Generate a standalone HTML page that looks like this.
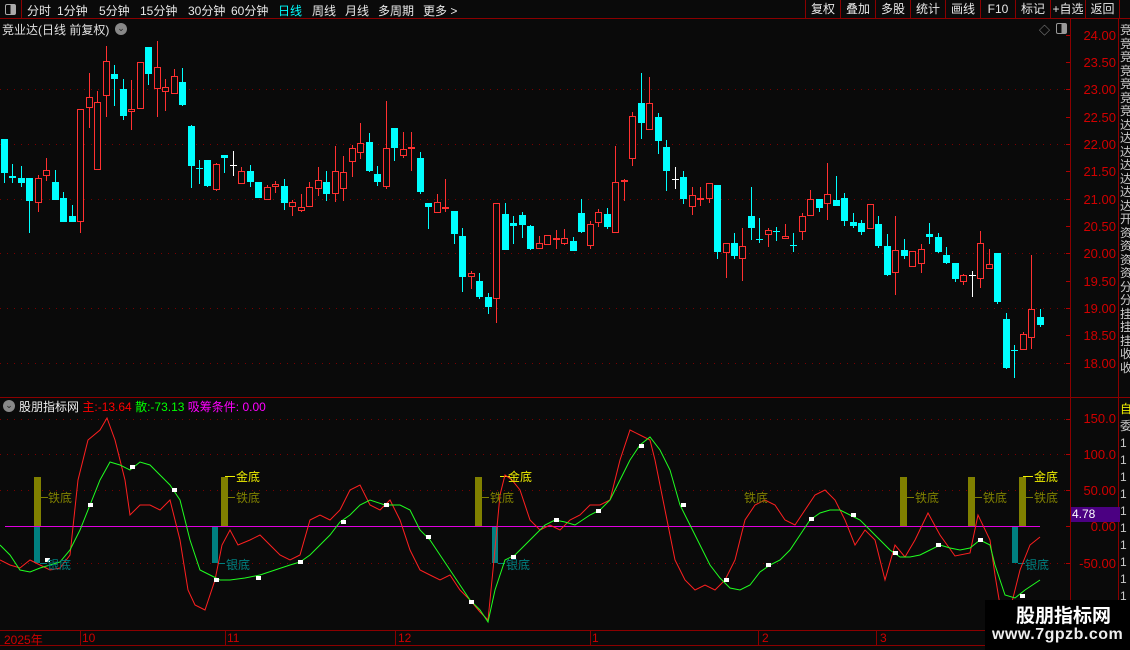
<!DOCTYPE html>
<html><head><meta charset="utf-8"><style>
*{margin:0;padding:0;box-sizing:border-box}
body{width:1130px;height:650px;background:#0a0a0a;overflow:hidden;position:relative;font-family:"Liberation Sans","Noto Sans CJK SC",sans-serif;color:#ddd;font-size:12px}
.a{position:absolute;white-space:nowrap}
.tb{position:absolute;top:0;left:0;width:1130px;height:19px;border-bottom:1px solid #8b0000}
.tb span{position:absolute;top:2px;font-size:12px;color:#e8e8e8}
.rb{position:absolute;top:0;height:19px;border-left:1px solid #8b0000;color:#e8e8e8;font-size:12px;text-align:center;line-height:18px}
.ax{position:absolute;left:1072px;width:44px;text-align:right;color:#d00000;font-size:13px;font-family:"Liberation Sans",sans-serif}
</style></head><body>
<div class="tb">
<div class="a" style="left:0;top:0;width:22px;height:19px;border-right:1px solid #8b0000"></div>
<div class="a" style="left:5px;top:4px;width:11px;height:11px;border:1px solid #aaa;border-radius:2px;background:linear-gradient(90deg,#0a0a0a 50%,#aaa 50%)"></div>
<span style="left:27px">分时</span><span style="left:57px">1分钟</span><span style="left:99px">5分钟</span><span style="left:140px">15分钟</span><span style="left:188px">30分钟</span><span style="left:231px">60分钟</span><span style="left:278px;color:#00ffff">日线</span><span style="left:312px">周线</span><span style="left:345px">月线</span><span style="left:378px">多周期</span><span style="left:423px">更多 &gt;</span>
</div>
<div class="rb" style="left:805px;width:35px">复权</div><div class="rb" style="left:840px;width:35px">叠加</div><div class="rb" style="left:875px;width:35px">多股</div><div class="rb" style="left:910px;width:35px">统计</div><div class="rb" style="left:945px;width:35px">画线</div><div class="rb" style="left:980px;width:35px">F10</div><div class="rb" style="left:1015px;width:35px">标记</div><div class="rb" style="left:1050px;width:35px">+自选</div><div class="rb" style="left:1085px;width:35px;border-right:1px solid #8b0000">返回</div>
<div class="a" style="left:2px;top:21px;font-size:12px;color:#e0e0e0">竞业达(日线 前复权)</div>
<div class="a" style="left:115px;top:23px;width:12px;height:12px;border-radius:6px;background:#888;color:#222;font-size:9px;text-align:center;line-height:11px">⌄</div>
<div class="a" style="left:1039px;top:22px;color:#999;font-size:11px">◇</div>
<div class="a" style="left:1056px;top:23px;width:11px;height:11px;border:1px solid #999;border-radius:2px;background:linear-gradient(90deg,#0a0a0a 50%,#999 50%)"></div>

<svg class="a" style="left:0;top:0" width="1130" height="650" id="s">
<line x1="1070.5" y1="19" x2="1070.5" y2="630" stroke="#8b0000"/>
<line x1="1118.5" y1="19" x2="1118.5" y2="650" stroke="#8b0000"/>
<line x1="0" y1="397.5" x2="1130" y2="397.5" stroke="#8b0000"/>
<line x1="0" y1="630.5" x2="1070" y2="630.5" stroke="#8b0000"/>
<line x1="0" y1="645.5" x2="1070" y2="645.5" stroke="#8b0000"/>
<g id="g"></g>
</svg>
<div class="ax" style="top:28px">24.00</div><div class="ax" style="top:55px">23.50</div><div class="ax" style="top:82px">23.00</div><div class="ax" style="top:110px">22.50</div><div class="ax" style="top:137px">22.00</div><div class="ax" style="top:164px">21.50</div><div class="ax" style="top:192px">21.00</div><div class="ax" style="top:219px">20.50</div><div class="ax" style="top:246px">20.00</div><div class="ax" style="top:274px">19.50</div><div class="ax" style="top:301px">19.00</div><div class="ax" style="top:328px">18.50</div><div class="ax" style="top:356px">18.00</div>
<div class="ax" style="top:411px">150.0</div><div class="ax" style="top:447px">100.0</div><div class="ax" style="top:483px">50.00</div><div class="ax" style="top:519px">0.00</div><div class="ax" style="top:556px">-50.00</div>
<div class="a" style="left:1071px;top:507px;width:49px;height:15px;background:#4b0082;color:#fff;font-size:12px;line-height:15px;padding-left:1px">4.78</div>
<div class="a" style="left:1120px;top:24px;width:10px;font-size:12px;line-height:13.5px;color:#ccc;white-space:normal;word-break:break-all;overflow:hidden;height:370px">竞竞竞竞竞竞竞达达达达达达达开资资资资分分挂挂挂收收</div>
<div class="a" style="left:1120px;top:400px;width:10px;font-size:12px;line-height:18px;color:#ee0;overflow:hidden">自</div>
<div class="a" style="left:1120px;top:418px;width:10px;font-size:12px;line-height:17px;color:#ccc;white-space:normal;word-break:break-all;overflow:hidden;height:200px">委1111111111</div>

<div class="a" style="left:3px;top:400px;width:12px;height:12px;border-radius:6px;background:#888;color:#222;font-size:9px;text-align:center;line-height:11px">⌄</div>
<div class="a" style="left:19px;top:398px;font-size:12px"><span style="color:#eee">股朋指标网</span> <span style="color:#f00">主:-13.64</span> <span style="color:#0f0">散:-73.13</span> <span style="color:#f0f">吸筹条件: 0.00</span></div>

<div class="a" style="left:4px;top:631px;color:#d00000;font-size:12px">2025年</div>
<div class="a" style="left:82px;top:631px;color:#d00000">10</div><div class="a" style="left:227px;top:631px;color:#d00000">11</div><div class="a" style="left:398px;top:631px;color:#d00000">12</div><div class="a" style="left:592px;top:631px;color:#d00000">1</div><div class="a" style="left:762px;top:631px;color:#d00000">2</div><div class="a" style="left:880px;top:631px;color:#d00000">3</div>

<div class="a" style="left:985px;top:600px;width:145px;height:50px;background:#000"></div>
<div class="a" style="left:1016px;top:601px;color:#fff;font-size:19px;font-weight:bold">股朋指标网</div>
<div class="a" style="left:992px;top:626px;color:#eee;font-size:16px;font-weight:bold;letter-spacing:0.5px">www.7gpzb.com</div>

<script>
var C=[[4,139,173,139,183,'c'],[12,176,178,164,183,'c'],[21,178,183,166,187,'c'],[29,178,201,178,233,'c'],[38,178,203,175,212,'r'],[46,170,176,158,181,'r'],[55,182,200,170,200,'c'],[63,198,222,192,222,'c'],[72,216,222,205,222,'c'],[80,109,222,109,233,'r'],[89,97,108,73,128,'r'],[97,102,170,91,170,'r'],[106,61,96,46,117,'r'],[114,74,79,65,106,'c'],[123,89,116,79,120,'c'],[131,109,112,80,130,'r'],[140,62,109,62,109,'r'],[148,47,74,47,85,'c'],[157,67,89,41,117,'r'],[165,87,92,79,111,'r'],[174,76,94,69,94,'r'],[182,82,105,68,106,'c'],[191,126,166,125,188,'c'],[199,168,168,160,184,'c'],[207,160,186,160,187,'c'],[216,164,190,163,191,'r'],[224,155,158,155,173,'c'],[233,165,165,151,176,'w'],[241,171,184,167,184,'r'],[250,171,182,165,187,'c'],[258,182,198,182,198,'c'],[267,187,200,185,200,'r'],[275,184,187,181,193,'r'],[284,186,203,179,210,'c'],[292,202,207,200,216,'r'],[301,207,211,194,212,'r'],[309,187,207,182,207,'r'],[318,180,189,167,196,'r'],[326,182,194,171,201,'c'],[335,171,194,146,202,'r'],[343,172,189,156,201,'r'],[352,148,162,145,177,'r'],[360,143,153,123,159,'r'],[369,142,171,133,172,'c'],[377,174,182,166,186,'c'],[386,148,187,101,189,'r'],[394,128,148,128,161,'c'],[403,149,156,132,158,'r'],[411,147,149,132,171,'r'],[420,158,192,152,194,'c'],[428,203,207,203,229,'c'],[437,202,213,194,213,'r'],[445,207,209,179,212,'r'],[454,211,234,211,244,'c'],[462,236,277,228,292,'c'],[471,273,277,271,289,'r'],[479,281,297,273,299,'c'],[488,297,307,293,314,'c'],[496,203,299,203,323,'r'],[505,214,250,203,250,'c'],[513,223,226,216,244,'c'],[522,215,225,212,238,'c'],[530,226,249,225,250,'c'],[539,243,249,236,249,'r'],[547,235,245,235,245,'r'],[556,238,240,230,249,'r'],[564,238,244,229,245,'r'],[573,241,251,237,251,'c'],[581,213,232,199,233,'c'],[590,224,246,221,249,'r'],[598,212,223,209,227,'r'],[607,214,227,208,229,'c'],[615,182,233,146,233,'r'],[624,180,182,179,201,'r'],[632,116,159,112,166,'r'],[641,103,123,73,139,'c'],[649,103,130,77,130,'r'],[658,117,141,113,154,'c'],[666,147,171,140,191,'c'],[675,179,179,167,189,'w'],[683,177,199,171,204,'c'],[692,195,207,187,215,'r'],[700,198,200,187,206,'r'],[709,183,199,183,203,'r'],[717,185,252,185,259,'c'],[726,243,253,243,278,'r'],[734,243,256,233,259,'c'],[742,246,259,228,281,'r'],[751,216,228,187,240,'c'],[759,239,239,218,243,'c'],[768,230,235,228,247,'r'],[776,231,231,227,241,'c'],[785,236,239,224,239,'r'],[793,245,245,233,252,'c'],[802,216,232,213,240,'r'],[810,199,216,190,216,'r'],[819,199,208,199,212,'c'],[827,194,204,163,220,'r'],[836,200,206,176,206,'c'],[844,198,221,193,226,'c'],[853,222,226,213,228,'c'],[861,223,232,220,235,'c'],[870,204,229,204,229,'r'],[878,224,246,216,248,'c'],[887,246,275,234,276,'c'],[895,250,273,216,295,'r'],[904,250,256,239,259,'c'],[912,251,267,251,267,'r'],[921,249,264,244,273,'r'],[929,234,237,223,244,'c'],[938,237,252,233,253,'c'],[946,255,263,247,264,'c'],[955,263,279,263,282,'c'],[963,275,282,274,285,'r'],[972,275,275,271,297,'w'],[980,243,279,231,288,'r'],[989,264,269,249,269,'r'],[997,253,302,253,304,'c'],[1006,319,368,313,369,'c'],[1014,350,350,345,378,'c'],[1023,334,350,332,350,'r'],[1031,309,338,255,349,'r'],[1040,317,325,309,327,'c']];
var s='';
[89,144,199,253,308,363,419,454,490,563].forEach(function(y){s+='<line x1="0" y1="'+(y+.5)+'" x2="1070" y2="'+(y+.5)+'" stroke="#7a0000" stroke-dasharray="1,6"/>';});
[35,62,89,117,144,171,199,226,253,281,308,335,363,419,454,490,526,563].forEach(function(y){s+='<line x1="1066" y1="'+(y+.5)+'" x2="1070" y2="'+(y+.5)+'" stroke="#b00000"/>';});
[80,225,395,590,758,876].forEach(function(x){s+='<line x1="'+(x+.5)+'" y1="630" x2="'+(x+.5)+'" y2="645" stroke="#8b0000"/>';});
C.forEach(function(c){var x=c[0],col=c[5]=='c'?'#00ffff':c[5]=='r'?'#ff3030':'#fff';
s+='<line x1="'+(x+.5)+'" y1="'+c[3]+'" x2="'+(x+.5)+'" y2="'+c[4]+'" stroke="'+col+'"/>';
var h=Math.max(c[2]-c[1],1);
if(c[5]=='c')s+='<rect x="'+(x-3)+'" y="'+c[1]+'" width="7" height="'+h+'" fill="'+col+'"/>';
else if(c[5]=='r')s+='<rect x="'+(x-2.5)+'" y="'+(c[1]+.5)+'" width="6" height="'+(h-1<1?1:h-1)+'" fill="#0a0a0a" stroke="'+col+'"/>';
else s+='<line x1="'+(x-3)+'" y1="'+(c[1]+.5)+'" x2="'+(x+4)+'" y2="'+(c[1]+.5)+'" stroke="#fff"/>';});
[[34,477],[221,477],[475,477],[900,477],[968,477],[1019,477]].forEach(function(b){s+='<rect x="'+b[0]+'" y="477" width="7" height="49" fill="#808000"/><line x1="'+(b[0]+7)+'" y1="497.5" x2="'+(b[0]+14)+'" y2="497.5" stroke="#808000"/>';});
[34,212,492,1012].forEach(function(x){s+='<rect x="'+x+'" y="526" width="6" height="37" fill="#008080"/><line x1="'+(x+6)+'" y1="563.5" x2="'+(x+13)+'" y2="563.5" stroke="#008080"/>';});
[221,496,1019].forEach(function(x){s+='<line x1="'+(x+4)+'" y1="476.5" x2="'+(x+14)+'" y2="476.5" stroke="#ee0"/>';});
s+='<line x1="5" y1="526.5" x2="1040" y2="526.5" stroke="#e000e0"/>';
var R=[0,560,10,565,20,568,30,560,40,565,50,570,60,568,70,555,78,480,88,440,100,430,107,418,115,440,125,480,130,515,140,505,150,505,160,510,170,500,180,540,188,590,195,605,205,610,215,580,222,545,230,530,238,545,250,540,260,535,270,545,280,555,290,560,300,555,310,520,320,515,330,520,340,510,350,490,360,485,370,505,380,510,390,500,400,520,410,550,420,570,430,575,440,580,450,575,460,590,470,600,480,612,488,620,493,570,500,495,505,475,512,480,520,490,530,520,540,530,550,525,560,530,570,520,580,515,590,505,600,505,610,500,620,460,630,430,640,435,650,440,655,460,665,510,675,560,685,580,695,590,705,585,715,590,725,580,735,560,745,520,755,505,765,500,775,505,785,520,795,525,805,510,815,495,825,490,835,500,845,520,855,545,865,530,875,540,885,580,895,545,905,557,915,540,928,513,940,535,955,556,970,553,978,515,990,540,995,575,1000,605,1010,610,1020,570,1030,545,1040,537];
var G=[0,545,10,555,20,570,30,572,40,568,50,565,60,562,70,550,80,530,90,505,100,480,110,462,120,465,130,470,140,462,150,465,160,475,170,485,180,500,190,540,200,570,210,575,220,580,230,580,245,578,260,575,275,570,290,565,300,562,310,555,320,545,330,535,340,522,350,515,360,505,370,500,385,505,400,505,410,510,420,530,430,540,440,555,450,570,460,585,470,600,480,610,488,622,495,590,505,560,515,555,525,545,535,535,545,525,555,520,565,522,575,525,590,515,600,510,610,500,620,480,630,460,640,445,650,437,660,450,670,470,680,505,690,525,700,545,710,565,720,578,730,588,740,590,750,585,760,572,770,565,780,560,790,550,800,535,810,520,820,513,830,510,840,510,850,515,860,520,870,530,880,540,890,550,900,557,910,557,920,555,930,550,940,545,950,548,960,550,970,548,980,540,990,545,995,565,1005,595,1015,598,1025,590,1040,580];
function pl(a,c){var p='';for(var i=0;i<a.length;i+=2)p+=a[i]+','+a[i+1]+' ';return '<polyline points="'+p+'" fill="none" stroke="'+c+'" stroke-width="1"/>';}
s+=pl(R,'#ff2020')+pl(G,'#20ff20');
[[47,560],[90,505],[132,467],[174,490],[216,580],[258,578],[300,562],[343,522],[386,505],[428,537],[471,602],[513,557],[556,520],[598,511],[641,446],[683,505],[726,580],[768,565],[811,519],[853,515],[895,553],[938,545],[980,540],[1022,596]].forEach(function(p){s+='<rect x="'+(p[0]-2)+'" y="'+(p[1]-2)+'" width="5" height="4" fill="#fff"/>';});
document.getElementById('g').innerHTML=s;
</script>
<div class="a" style="left:236px;top:468px;color:#ee0;font-size:12px">金底</div>
<div class="a" style="left:508px;top:468px;color:#ee0;font-size:12px">金底</div>
<div class="a" style="left:1034px;top:468px;color:#ee0;font-size:12px">金底</div>
<div class="a" style="left:48px;top:489px;color:#808000">铁底</div><div class="a" style="left:236px;top:489px;color:#808000">铁底</div><div class="a" style="left:490px;top:489px;color:#808000">铁底</div><div class="a" style="left:744px;top:489px;color:#808000">铁底</div><div class="a" style="left:915px;top:489px;color:#808000">铁底</div><div class="a" style="left:983px;top:489px;color:#808000">铁底</div><div class="a" style="left:1034px;top:489px;color:#808000">铁底</div>
<div class="a" style="left:47px;top:556px;color:#008080">银底</div><div class="a" style="left:226px;top:556px;color:#008080">银底</div><div class="a" style="left:506px;top:556px;color:#008080">银底</div><div class="a" style="left:1025px;top:556px;color:#008080">银底</div>
</body></html>
